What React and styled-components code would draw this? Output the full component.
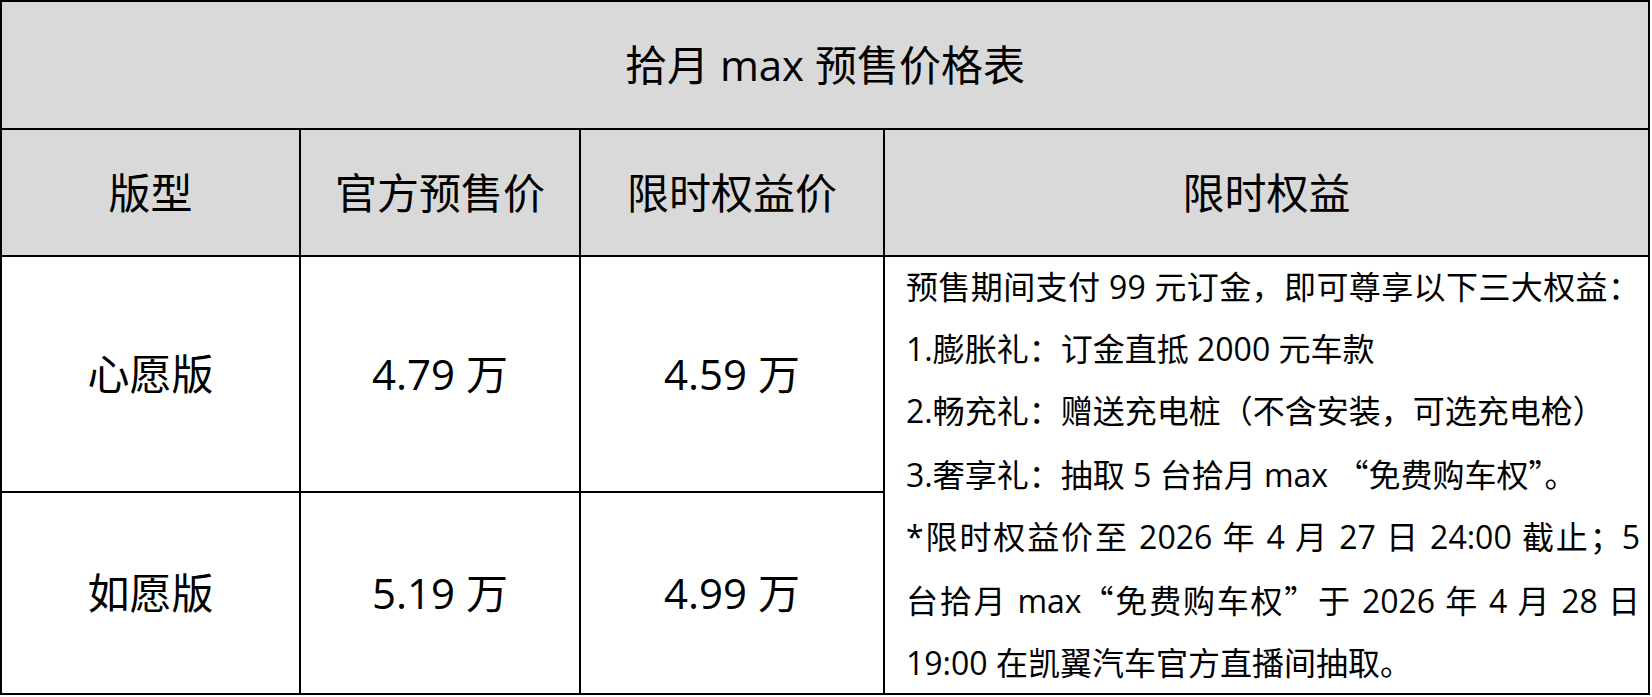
import React from 'react';
import styled, { createGlobalStyle } from 'styled-components';

const GlobalStyle = createGlobalStyle`
  body {
    margin: 0;
    background: #ffffff;
    font-family: "Open Sans", "Noto Sans CJK SC", sans-serif;
    color: #000000;
  }
`;

const Sheet = styled.div`
  display: grid;
  grid-template-columns: 297px 278px 302px 763px;
  grid-template-rows: 126px 125px 234px 200px;
  gap: 2px;
  padding: 2px;
  width: 1650px;
  box-sizing: border-box;
  background: #000000;
`;

const Cell = styled.div`
  display: flex;
  align-items: center;
  justify-content: center;
  background: ${(p) => (p.$head ? '#d9d9d9' : '#ffffff')};
  font-size: 42px;
  line-height: 1;
  white-space: nowrap;
`;

const TitleCell = styled(Cell)`
  grid-column: 1 / -1;
`;

const NoteCell = styled.div`
  grid-column: 4;
  grid-row: 3 / span 2;
  display: flex;
  flex-direction: column;
  justify-content: center;
  padding: 0 8px 0 21px;
  background: #ffffff;
  font-size: 32px;
  line-height: 62px;
`;

const NoteLine = styled.div`
  white-space: nowrap;
  text-align: ${(p) => (p.$justify ? 'justify' : 'left')};
  text-align-last: ${(p) => (p.$justify ? 'justify' : 'auto')};
`;

const Quote = styled.span`
  font-family: "Noto Sans CJK SC", sans-serif;
`;

const headers = ['版型', '官方预售价', '限时权益价', '限时权益'];

const versions = [
  { name: '心愿版', official: '4.79 万', promo: '4.59 万' },
  { name: '如愿版', official: '5.19 万', promo: '4.99 万' },
];

const App = () => (
  <>
    <GlobalStyle />
    <Sheet>
      <TitleCell $head>拾月 max 预售价格表</TitleCell>
      {headers.map((h) => (
        <Cell $head key={h}>{h}</Cell>
      ))}
      {versions.map((v, i) => (
        <React.Fragment key={v.name}>
          <Cell>{v.name}</Cell>
          <Cell>{v.official}</Cell>
          <Cell>{v.promo}</Cell>
          {i === 0 && (
            <NoteCell>
              <NoteLine $justify>预售期间支付 99 元订金，即可尊享以下三大权益：</NoteLine>
              <NoteLine>1.膨胀礼：订金直抵 2000 元车款</NoteLine>
              <NoteLine>2.畅充礼：赠送充电桩（不含安装，可选充电枪）</NoteLine>
              <NoteLine>
                3.奢享礼：抽取 5 台拾月 max <Quote>“</Quote>免费购车权<Quote>”</Quote>。
              </NoteLine>
              <NoteLine $justify>*限时权益价至 2026 年 4 月 27 日 24:00 截止；5</NoteLine>
              <NoteLine $justify>
                台拾月 max<Quote>“</Quote>免费购车权<Quote>”</Quote>于 2026 年 4 月 28 日
              </NoteLine>
              <NoteLine>19:00 在凯翼汽车官方直播间抽取。</NoteLine>
            </NoteCell>
          )}
        </React.Fragment>
      ))}
    </Sheet>
  </>
);

export default App;
